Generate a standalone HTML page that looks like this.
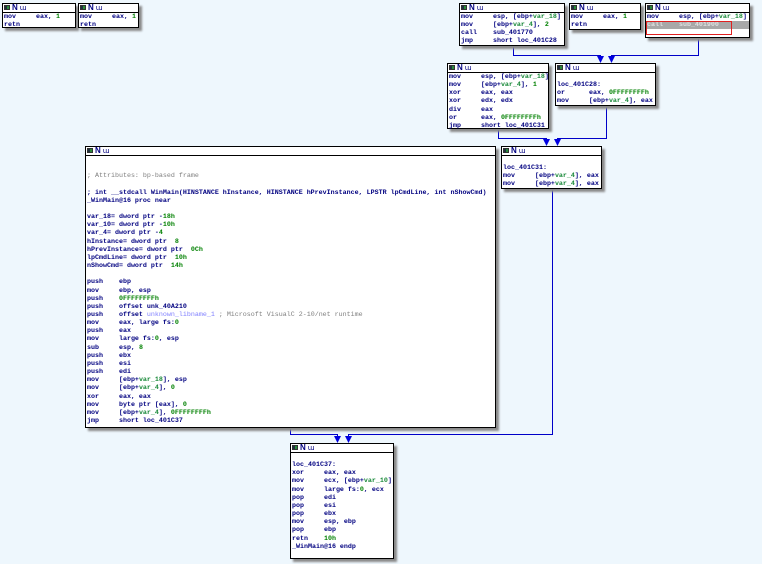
<!DOCTYPE html>
<html><head><meta charset="utf-8"><style>
body{margin:0;width:762px;height:564px;background:#eef7fd;position:relative;overflow:hidden;font-family:"Liberation Mono",monospace;}
.b{position:absolute;box-sizing:border-box;background:#fff;border:1px solid #000;box-shadow:3px 3px 2px #8a8a8a;}
.t{height:8px;border-bottom:1px solid #000;position:relative;font:bold 7px "Liberation Sans",sans-serif;line-height:8px;white-space:nowrap;overflow:hidden}
.t i{display:inline-block;width:6px;height:5px;margin:1px 2px 0 1px;vertical-align:top;background:linear-gradient(90deg,#203040 0 2px,#2a8a3a 2px 4px,#a03020 4px);border:1px solid #333;box-sizing:border-box}
.t b{color:#000080;font-size:8px}
.t u{text-decoration:none;color:#000080;font-weight:normal;font-family:"DejaVu Sans",sans-serif;font-size:7px;margin-left:2px}
.c{font-size:6.67px;font-weight:bold;line-height:8.15px;white-space:pre;color:#000080;padding-left:1px;overflow:hidden}
.g{color:#008000}.v{color:#1a8a3a}.m{color:#808080;font-weight:normal}.u{color:#8080ff;font-weight:normal}
.hl{background:#a8a8a8;color:#e0e0e0}
</style></head><body>
<svg width="762" height="564" style="position:absolute;left:0;top:0" fill="none" stroke="#0000c8" stroke-width="1">
<polyline points="513.5,46 513.5,55.5 600.5,55.5 600.5,60"/>
<polyline points="698.5,37 698.5,55.5 611.5,55.5 611.5,60"/>
<polyline points="498.5,129 498.5,138.5 546.5,138.5 546.5,143"/>
<polyline points="606.5,106 606.5,138.5 557.5,138.5 557.5,143"/>
<polyline points="290.5,428 290.5,434.5 337.5,434.5 337.5,440"/>
<polyline points="552.5,189 552.5,434.5 348.5,434.5 348.5,440"/>
<g fill="#0000e0" stroke="none">
<polygon points="597,56 604,56 600.5,63"/><polygon points="608,56 615,56 611.5,63"/>
<polygon points="543,139 550,139 546.5,146"/><polygon points="554,139 561,139 557.5,146"/>
<polygon points="334,436 341,436 337.5,443"/><polygon points="345,436 352,436 348.5,443"/>
</g></svg>

<div class="b" style="left:2px;top:3px;width:74px;height:25px"><div class="t"><i></i><b>N</b><u>ɯ</u></div><div class="c">mov     eax, <span class="g">1</span>
retn</div></div>

<div class="b" style="left:78px;top:3px;width:61px;height:25px"><div class="t"><i></i><b>N</b><u>ɯ</u></div><div class="c">mov     eax, <span class="g">1</span>
retn</div></div>

<div class="b" style="left:459px;top:3px;width:106px;height:43px"><div class="t"><i></i><b>N</b><u>ɯ</u></div><div class="c">mov     esp, [ebp+<span class="v">var_18</span>]
mov     [ebp+<span class="v">var_4</span>], <span class="g">2</span>
call    sub_401770
jmp     short loc_401C28</div></div>

<div class="b" style="left:569px;top:3px;width:72px;height:27px"><div class="t"><i></i><b>N</b><u>ɯ</u></div><div class="c">mov     eax, <span class="g">1</span>
retn</div></div>

<div class="b" style="left:645px;top:3px;width:105px;height:35px"><div class="t"><i></i><b>N</b><u>ɯ</u></div><div class="c">mov     esp, [ebp+<span class="v">var_18</span>]
<span class="hl" style="display:block">call    sub_401900</span></div></div>
<div style="position:absolute;left:646px;top:21px;width:86px;height:14px;box-sizing:border-box;border:1px solid #e02020"></div>

<div class="b" style="left:447px;top:63px;width:102px;height:66px"><div class="t"><i></i><b>N</b><u>ɯ</u></div><div class="c">mov     esp, [ebp+<span class="v">var_18</span>]
mov     [ebp+<span class="v">var_4</span>], <span class="g">1</span>
xor     eax, eax
xor     edx, edx
div     eax
or      eax, <span class="g">0FFFFFFFFh</span>
jmp     short loc_401C31</div></div>

<div class="b" style="left:555px;top:63px;width:101px;height:43px"><div class="t"><i></i><b>N</b><u>ɯ</u></div><div class="c">
loc_401C28:
or      eax, <span class="g">0FFFFFFFFh</span>
mov     [ebp+<span class="v">var_4</span>], eax</div></div>

<div class="b" style="left:85px;top:146px;width:411px;height:282px"><div class="t"><i></i><b>N</b><u>ɯ</u></div><div class="c">

<span class="m">; Attributes: bp-based frame</span>

; int __stdcall WinMain(HINSTANCE hInstance, HINSTANCE hPrevInstance, LPSTR lpCmdLine, int nShowCmd)
_WinMain@16 proc near

var_18= dword ptr -<span class="g">18h</span>
var_10= dword ptr -<span class="g">10h</span>
var_4= dword ptr -<span class="g">4</span>
hInstance= dword ptr  <span class="g">8</span>
hPrevInstance= dword ptr  <span class="g">0Ch</span>
lpCmdLine= dword ptr  <span class="g">10h</span>
nShowCmd= dword ptr  <span class="g">14h</span>

push    ebp
mov     ebp, esp
push    <span class="g">0FFFFFFFFh</span>
push    offset unk_40A210
push    offset <span class="u">unknown_libname_1</span> <span class="m">; Microsoft VisualC 2-10/net runtime</span>
mov     eax, large fs:<span class="g">0</span>
push    eax
mov     large fs:<span class="g">0</span>, esp
sub     esp, <span class="g">8</span>
push    ebx
push    esi
push    edi
mov     [ebp+<span class="v">var_18</span>], esp
mov     [ebp+<span class="v">var_4</span>], <span class="g">0</span>
xor     eax, eax
mov     byte ptr [eax], <span class="g">0</span>
mov     [ebp+<span class="v">var_4</span>], <span class="g">0FFFFFFFFh</span>
jmp     short loc_401C37</div></div>

<div class="b" style="left:501px;top:146px;width:101px;height:43px"><div class="t"><i></i><b>N</b><u>ɯ</u></div><div class="c">
loc_401C31:
mov     [ebp+<span class="v">var_4</span>], eax
mov     [ebp+<span class="v">var_4</span>], eax</div></div>

<div class="b" style="left:290px;top:443px;width:104px;height:116px"><div class="t"><i></i><b>N</b><u>ɯ</u></div><div class="c">
loc_401C37:
xor     eax, eax
mov     ecx, [ebp+<span class="v">var_10</span>]
mov     large fs:<span class="g">0</span>, ecx
pop     edi
pop     esi
pop     ebx
mov     esp, ebp
pop     ebp
retn    <span class="g">10h</span>
_WinMain@16 endp</div></div>
</body></html>
